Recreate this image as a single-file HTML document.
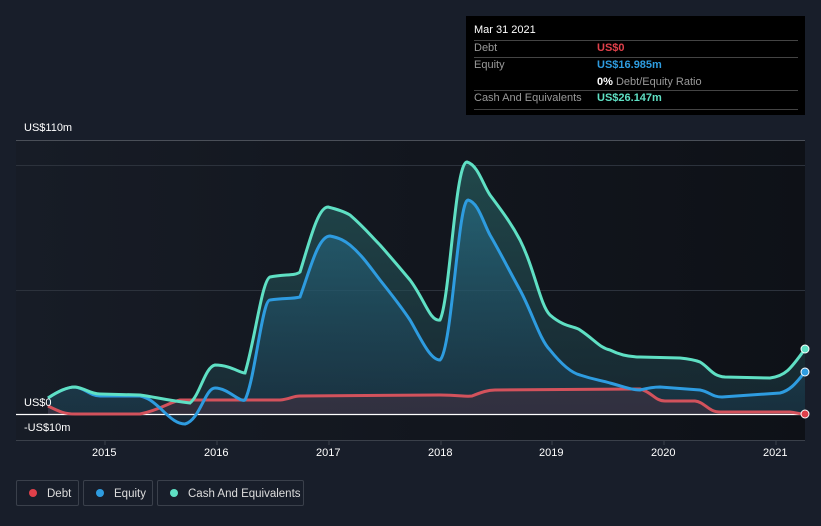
<!DOCTYPE html><html><head><style>
body{margin:0;width:821px;height:526px;background:#181e2a;font-family:"Liberation Sans",sans-serif;overflow:hidden;position:relative}
.t{position:absolute;font-size:11px;color:#fff}
.tip{position:absolute;left:466px;top:16px;width:339px;height:99px;background:#000;font-size:11px}
.row{position:absolute;left:8px;right:7px;border-top:1px solid #444;height:17px;padding-top:1px}
.lg{position:absolute;top:480px;height:26px;border:1px solid #3a404b;border-radius:2px;color:#ddd;font-size:11.5px;line-height:26px;box-sizing:border-box}
.dot{display:inline-block;width:8px;height:8px;border-radius:50%;margin:0 10px 0 12px;vertical-align:-0px}
</style></head><body>
<svg width="821" height="526" style="position:absolute;left:0;top:0">
<defs><linearGradient id="bg" x1="0" x2="1"><stop offset="0" stop-color="#171c26"/><stop offset="1" stop-color="#0e1117"/></linearGradient>
<linearGradient id="cf" x1="0" y1="0" x2="0" y2="1"><stop offset="0" stop-color="#2a6a6a" stop-opacity=".6"/><stop offset="1" stop-color="#1d3a45" stop-opacity=".5"/></linearGradient>
<linearGradient id="ef" x1="0" y1="0" x2="0" y2="1"><stop offset="0" stop-color="#2a7a98" stop-opacity=".5"/><stop offset="1" stop-color="#1a3a50" stop-opacity=".4"/></linearGradient></defs>
<rect x="16" y="140" width="789" height="300" fill="url(#bg)"/>
<line x1="16" y1="140.5" x2="805" y2="140.5" stroke="#4a4f58"/>
<line x1="16" y1="165.5" x2="805" y2="165.5" stroke="#2c323c"/>
<line x1="16" y1="290.5" x2="805" y2="290.5" stroke="#2c323c"/>
<line x1="16" y1="440.5" x2="805" y2="440.5" stroke="#3a404a"/>
<g stroke="#3a404a"><line x1="105" y1="440" x2="105" y2="445"/><line x1="217" y1="440" x2="217" y2="445"/><line x1="329" y1="440" x2="329" y2="445"/><line x1="441" y1="440" x2="441" y2="445"/><line x1="552" y1="440" x2="552" y2="445"/><line x1="664" y1="440" x2="664" y2="445"/><line x1="776" y1="440" x2="776" y2="445"/></g>
<path d="M48,398 C60,390 68,387 75,387 C85,388 90,394 100,394 L140,395 C155,397 165,400 190,403 C200,395 205,367 215,365 C230,365 240,373 245,373 C255,340 262,280 270,277 C285,274 295,276 300,272 C310,240 318,207 328,207 C340,210 345,212 350,215 C365,228 370,235 380,245 C395,262 400,268 410,280 C425,300 430,322 440,320 C450,300 455,162 467,162 C478,165 483,185 490,195 C505,215 512,225 520,240 C535,270 540,305 550,315 C565,328 575,326 580,330 C595,340 600,348 610,350 C620,355 630,357 640,357 L680,358 C690,359 695,360 700,362 C710,368 712,376 725,377 L770,378 C785,376 790,370 805,349 L805,414 L48,414Z" fill="url(#cf)"/>
<path d="M48,398 C60,390 68,387 75,387 C85,388 90,396 100,396 L140,396 C150,398 155,404 160,408 C172,420 178,424 185,424 C200,420 205,388 215,388 C228,388 240,403 245,400 C255,380 262,300 270,300 C285,298 292,299 300,297 C310,270 318,236 330,236 C340,238 345,241 350,245 C362,255 370,267 380,280 C392,295 400,305 410,320 C420,337 430,360 440,360 C452,350 458,200 468,200 C478,202 483,222 490,235 C500,252 510,272 520,290 C532,312 540,340 550,350 C562,365 572,373 580,375 C595,380 600,380 610,383 C625,387 632,390 640,390 C648,388 655,387 660,387 L700,390 C710,392 712,397 722,397 L780,393 C792,390 798,380 805,372 L805,414 L48,414Z" fill="url(#ef)"/>
<path d="M48,406 C60,412 65,414 75,414 L140,414 C160,410 170,402 180,400 L280,400 C290,399 293,396 300,396 L440,395 C460,395 465,397 472,396 C482,392 488,390 495,390 L640,389 C652,392 655,401 665,401 L695,401 C705,402 708,412 720,412 L790,412 C798,413 800,414 805,414 L805,414 L48,414Z" fill="#4a3040" fill-opacity=".5"/>
<line x1="16" y1="414.5" x2="805" y2="414.5" stroke="#fff" stroke-width="1.2"/>
<path d="M48,406 C60,412 65,414 75,414 L140,414 C160,410 170,402 180,400 L280,400 C290,399 293,396 300,396 L440,395 C460,395 465,397 472,396 C482,392 488,390 495,390 L640,389 C652,392 655,401 665,401 L695,401 C705,402 708,412 720,412 L790,412 C798,413 800,414 805,414" fill="none" stroke="#d3525c" stroke-width="3"/>
<path d="M48,398 C60,390 68,387 75,387 C85,388 90,396 100,396 L140,396 C150,398 155,404 160,408 C172,420 178,424 185,424 C200,420 205,388 215,388 C228,388 240,403 245,400 C255,380 262,300 270,300 C285,298 292,299 300,297 C310,270 318,236 330,236 C340,238 345,241 350,245 C362,255 370,267 380,280 C392,295 400,305 410,320 C420,337 430,360 440,360 C452,350 458,200 468,200 C478,202 483,222 490,235 C500,252 510,272 520,290 C532,312 540,340 550,350 C562,365 572,373 580,375 C595,380 600,380 610,383 C625,387 632,390 640,390 C648,388 655,387 660,387 L700,390 C710,392 712,397 722,397 L780,393 C792,390 798,380 805,372" fill="none" stroke="#2e9ce0" stroke-width="3"/>
<path d="M48,398 C60,390 68,387 75,387 C85,388 90,394 100,394 L140,395 C155,397 165,400 190,403 C200,395 205,367 215,365 C230,365 240,373 245,373 C255,340 262,280 270,277 C285,274 295,276 300,272 C310,240 318,207 328,207 C340,210 345,212 350,215 C365,228 370,235 380,245 C395,262 400,268 410,280 C425,300 430,322 440,320 C450,300 455,162 467,162 C478,165 483,185 490,195 C505,215 512,225 520,240 C535,270 540,305 550,315 C565,328 575,326 580,330 C595,340 600,348 610,350 C620,355 630,357 640,357 L680,358 C690,359 695,360 700,362 C710,368 712,376 725,377 L770,378 C785,376 790,370 805,349" fill="none" stroke="#5fe0c4" stroke-width="3"/>
<circle cx="805" cy="349" r="4" fill="#5fe0c4" stroke="#fff"/><circle cx="805" cy="372" r="4" fill="#2e9ce0" stroke="#fff"/><circle cx="805" cy="414" r="4" fill="#e0404a" stroke="#fff"/>
</svg>
<div class="t" style="left:24px;top:122px">US$110m</div>
<div class="t" style="left:24px;top:397px">US$0</div>
<div class="t" style="left:24px;top:422px">-US$10m</div>
<div class="t" style="left:92px;top:447px">2015</div><div class="t" style="left:204px;top:447px">2016</div><div class="t" style="left:316px;top:447px">2017</div><div class="t" style="left:428px;top:447px">2018</div><div class="t" style="left:539px;top:447px">2019</div><div class="t" style="left:651px;top:447px">2020</div><div class="t" style="left:763px;top:447px">2021</div>
<div class="tip">
<div style="position:absolute;left:8px;top:8px;color:#fff">Mar 31 2021</div>
<div class="row" style="top:24px"><span style="color:#999">Debt</span><span style="position:absolute;left:123px;color:#e0404a;font-weight:bold">US$0</span></div>
<div class="row" style="top:41px"><span style="color:#999">Equity</span><span style="position:absolute;left:123px;color:#2e9ce0;font-weight:bold">US$16.985m</span><div style="position:absolute;left:123px;top:18px;color:#999;white-space:nowrap"><b style="color:#fff">0%</b> Debt/Equity Ratio</div></div>
<div class="row" style="top:74px;border-bottom:1px solid #444"><span style="color:#999">Cash And Equivalents</span><span style="position:absolute;left:123px;color:#5fe0c4;font-weight:bold">US$26.147m</span></div>
</div>
<div class="lg" style="left:16px;width:63px"><span class="dot" style="background:#e0404a"></span>Debt</div>
<div class="lg" style="left:83px;width:70px"><span class="dot" style="background:#2e9ce0"></span>Equity</div>
<div class="lg" style="left:157px;width:147px"><span class="dot" style="background:#5fe0c4"></span>Cash And Equivalents</div>
</body></html>
